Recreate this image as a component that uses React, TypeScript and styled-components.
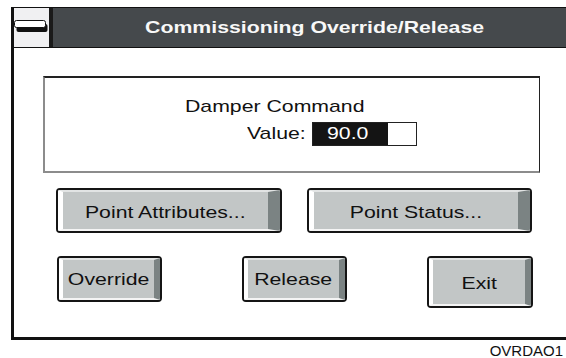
import React from "react";
import styled, { createGlobalStyle } from "styled-components";

const Global = createGlobalStyle`
  html, body { margin: 0; padding: 0; background: #ffffff; }
  body { width: 566px; height: 358px; overflow: hidden; font-family: "Liberation Sans", Arial, sans-serif; }
  #root { width: 566px; height: 358px; overflow: hidden; }
`;

const Page = styled.div`
  width: 566px;
  height: 358px;
  padding-top: 7px;
  box-sizing: border-box;
  overflow: hidden;
`;

const Window = styled.div`
  margin-left: 11px;
  width: 569px;
  height: 333px;
  box-sizing: border-box;
  border-left: 3px solid #111;
  border-top: 1px solid #111;
  border-bottom: 3px solid #111;
  display: flex;
  flex-direction: column;
`;

const TitleBar = styled.div`
  display: flex;
  height: 40px;
  box-sizing: border-box;
  border-bottom: 1px solid #111;
`;

const SysBox = styled.div`
  width: 35px;
  background: #f0f0f2;
  border-right: 4px solid #1a1a1a;
  display: flex;
  align-items: flex-start;
  padding-top: 12px;
  box-sizing: content-box;
`;

const TitleArea = styled.div`
  flex: 1;
  background: #45494c;
  color: #f8f8f8;
  font-weight: bold;
  font-size: 17px;
  line-height: 20px;
  display: flex;
  align-items: center;
  justify-content: center;
  padding-top: 1px;
  padding-right: 3px;
`;

const Stretch = styled.span<{ $origin?: string }>`
  display: inline-block;
  white-space: nowrap;
  transform: scaleX(1.25);
  transform-origin: ${(p) => p.$origin ?? "center"};
`;

const Body = styled.div`
  display: flex;
  flex-direction: column;
  padding-left: 29px;
  padding-top: 28px;
`;

const Panel = styled.div`
  width: 497px;
  height: 97px;
  box-sizing: border-box;
  border-top: 2px solid #222;
  border-right: 1px solid #222;
  border-left: 2px solid #8c8c8c;
  border-bottom: 2px solid #8c8c8c;
  padding-top: 19px;
  padding-left: 140px;
  display: flex;
  flex-direction: column;
  color: #111;
  font-size: 17px;
`;

const Heading = styled.div`
  line-height: 20px;
  height: 20px;
`;

const ValueRow = styled.div`
  display: flex;
  align-items: baseline;
  margin-top: 5px;
  margin-left: 62px;
`;

const ValueLabel = styled.div`
  width: 65px;
  line-height: 20px;
`;

const Field = styled.div`
  display: flex;
  height: 24px;
  box-sizing: border-box;
  border: 1px solid #222;
  line-height: 16px;
`;

const Selected = styled.div`
  width: 75px;
  background: #141414;
  color: #fff;
  padding-left: 14px;
  padding-top: 3px;
  box-sizing: border-box;
`;

const Blank = styled.div`
  width: 28px;
  background: #fff;
`;

const Row = styled.div<{ $left: number; $gap: number; $top: number }>`
  display: flex;
  align-items: flex-start;
  margin-left: ${(p) => p.$left}px;
  margin-top: ${(p) => p.$top}px;
  gap: ${(p) => p.$gap}px;
`;

const Button = styled.div<{ $w: number; $h: number }>`
  width: ${(p) => p.$w}px;
  height: ${(p) => p.$h}px;
  box-sizing: border-box;
  border: 2px solid #151515;
  border-radius: 4px;
  overflow: hidden;
  display: flex;
`;

const Face = styled.div<{ $big?: boolean; $pt?: number }>`
  flex: 1;
  background: #c2c6c6;
  border-style: solid;
  border-left-width: ${(p) => (p.$big ? 5 : 4)}px;
  border-right-width: ${(p) => (p.$big ? 12 : 6)}px;
  border-top-width: 2px;
  border-bottom-width: 2px;
  border-left-color: #ffffff;
  border-top-color: #e2e4e4;
  border-right-color: #7b8383;
  border-bottom-color: #f4f4f4;
  display: flex;
  align-items: center;
  justify-content: center;
  font-size: 17px;
  line-height: 20px;
  color: #111;
  padding-top: ${(p) => p.$pt ?? 0}px;
`;

const Footer = styled.div`
  margin-top: 2px;
  text-align: right;
  padding-right: 3px;
  font-size: 15px;
  line-height: 17px;
  color: #111;
`;

const SysIcon = () => (
  <svg width="34" height="13" viewBox="0 0 34 13">
    <rect x="2.5" y="4" width="31" height="8" rx="2" fill="#111" />
    <rect x="0.5" y="0.5" width="31" height="7" rx="2" fill="#fff" stroke="#111" strokeWidth="1" />
  </svg>
);

export default function App() {
  return (
    <>
      <Global />
      <Page>
        <Window>
          <TitleBar>
            <SysBox>
              <SysIcon />
            </SysBox>
            <TitleArea>
              <Stretch>Commissioning Override/Release</Stretch>
            </TitleArea>
          </TitleBar>
          <Body>
            <Panel>
              <Heading>
                <Stretch $origin="left">Damper Command</Stretch>
              </Heading>
              <ValueRow>
                <ValueLabel>
                  <Stretch $origin="left">Value:</Stretch>
                </ValueLabel>
                <Field>
                  <Selected>
                    <Stretch $origin="left">90.0</Stretch>
                  </Selected>
                  <Blank />
                </Field>
              </ValueRow>
            </Panel>
            <Row $left={13} $gap={25} $top={15}>
              <Button $w={226} $h={45}>
                <Face $big $pt={5}>
                  <Stretch>Point Attributes...</Stretch>
                </Face>
              </Button>
              <Button $w={225} $h={45}>
                <Face $big $pt={5}>
                  <Stretch>Point Status...</Stretch>
                </Face>
              </Button>
            </Row>
            <Row $left={14} $gap={80} $top={23}>
              <Button $w={105} $h={46}>
                <Face $pt={1}>
                  <Stretch>Override</Stretch>
                </Face>
              </Button>
              <Button $w={105} $h={46}>
                <Face $pt={1}>
                  <Stretch>Release</Stretch>
                </Face>
              </Button>
              <Button $w={106} $h={52}>
                <Face $pt={4}>
                  <Stretch>Exit</Stretch>
                </Face>
              </Button>
            </Row>
          </Body>
        </Window>
        <Footer>OVRDAO1</Footer>
      </Page>
    </>
  );
}
